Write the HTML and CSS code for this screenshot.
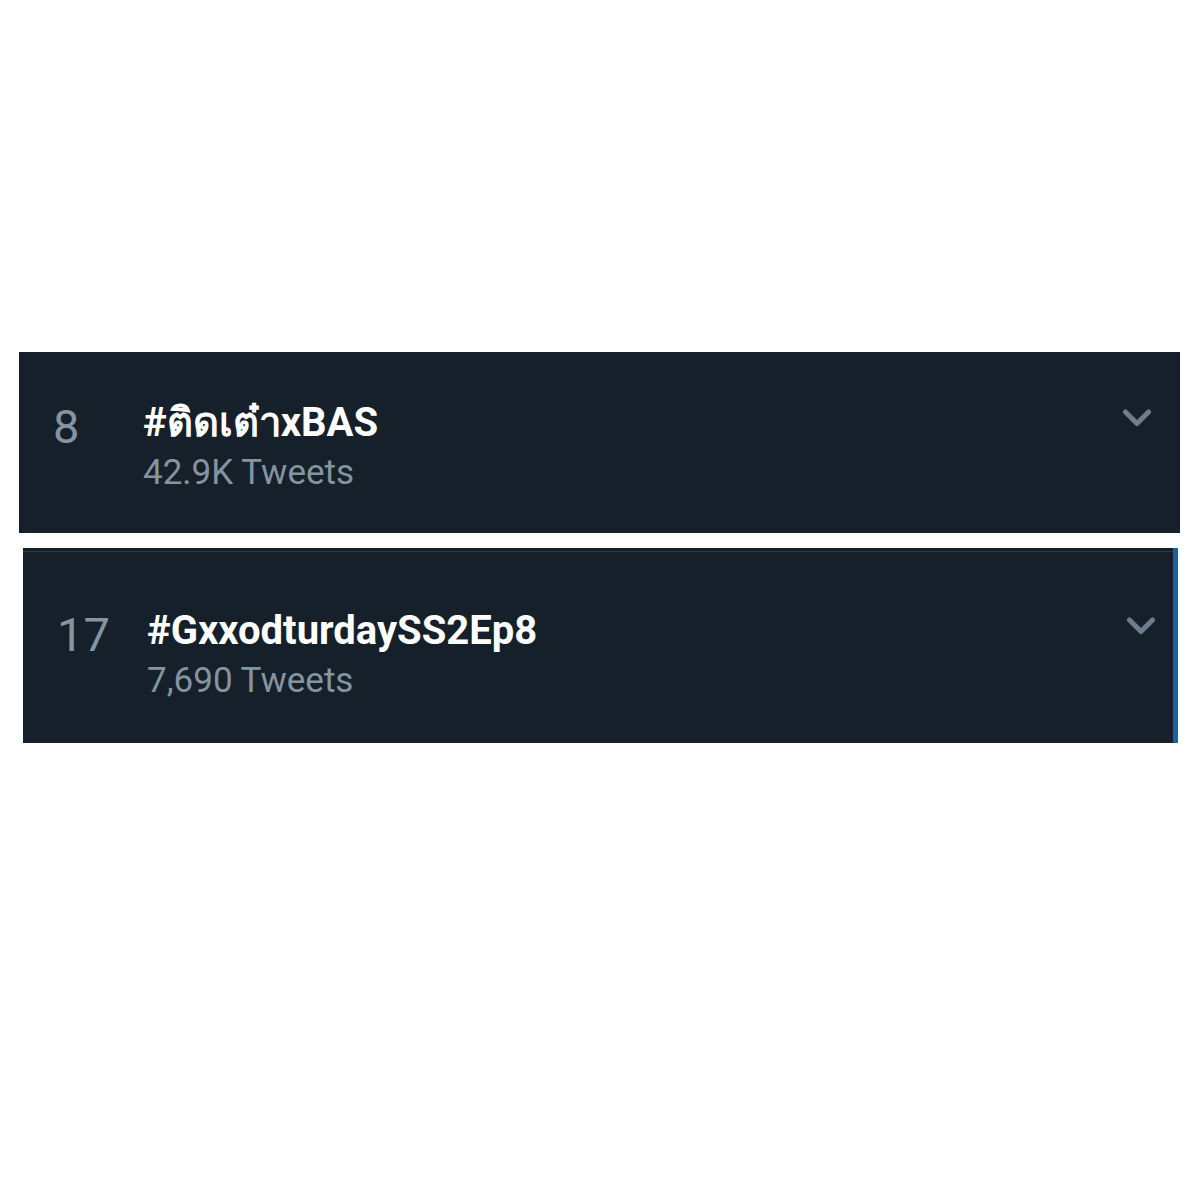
FILE: index.html
```html
<!DOCTYPE html>
<html lang="en">
<head>
    <meta charset="UTF-8">
    <meta name="viewport" content="width=device-width, initial-scale=1.0">
    <title>Trends</title>
    <link rel="stylesheet" href="styles.css">
</head>
<body>
    <main class="trends">
        <article class="trend">
            <span class="rank">8</span>
            <div class="info">
                <h2 class="name" lang="th">#ติดเต๋าxBAS</h2>
                <p class="count">42.9K Tweets</p>
            </div>
            <button type="button" class="more" aria-label="More options">
                <svg class="chevron" viewBox="0 0 30 20" aria-hidden="true">
                    <path d="M3.5 4 L15 15.5 L26.5 4"/>
                </svg>
            </button>
        </article>
        <article class="trend trend-marked">
            <span class="rank">17</span>
            <div class="info">
                <h2 class="name">#GxxodturdaySS2Ep8</h2>
                <p class="count">7,690 Tweets</p>
            </div>
            <button type="button" class="more" aria-label="More options">
                <svg class="chevron" viewBox="0 0 30 20" aria-hidden="true">
                    <path d="M3.5 4 L15 15.5 L26.5 4"/>
                </svg>
            </button>
        </article>
    </main>
</body>
</html>
```
FILE: styles.css
```css
body {
    margin: 0;
    background-color: #fff;
    font-family: Roboto, "Noto Sans", sans-serif;
}

.trends {
    display: flex;
    flex-direction: column;
    gap: 15px;
    padding: 352px 20px 40px 19px;
}

.trend {
    display: flex;
    align-items: flex-start;
    padding: 47px 28px 34px 34px;
    background-color: #16202a;
}

/* second card is slightly narrower, with a divider near the top */
.trend-marked {
    margin: 0 2px 0 4px;
    padding: 59px 17px 36px 34px;
    border-right: 5px solid #1b6193;
    box-shadow: inset 0 3px #16202a, inset 0 4px #2b3a48;
}

.rank {
    width: 90px;
    color: #8494a1;
    font-size: 47px;
    line-height: 56px;
}

.info {
    flex: 1;
}

.name {
    margin: 0;
    color: #fff;
    font-size: 40px;
    font-weight: 700;
    line-height: 48px;
}

.count {
    margin: 0;
    color: #8494a1;
    font-size: 35px;
    line-height: 52px;
}

.more {
    margin-top: 9px;
    padding: 0;
    border: none;
    background: none;
    cursor: pointer;
}

.chevron {
    display: block;
    width: 30px;
    height: 20px;
    fill: none;
    stroke: #6c7d8c;
    stroke-width: 5;
    stroke-linecap: round;
    stroke-linejoin: round;
}
```
